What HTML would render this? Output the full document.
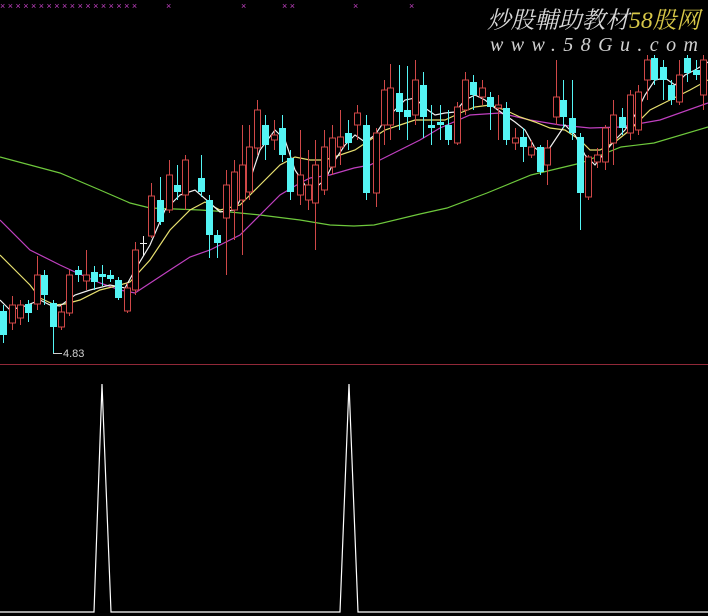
<!DOCTYPE html>
<html><head><meta charset="utf-8"><style>
html,body{margin:0;padding:0;background:#000;width:708px;height:616px;overflow:hidden}
svg{display:block}
</style></head><body>
<svg width="708" height="616" viewBox="0 0 708 616" xmlns="http://www.w3.org/2000/svg">
<rect width="708" height="616" fill="#000"/>
<g fill="#c040c0" font-family="Liberation Sans, sans-serif" font-size="9">
<text x="0" y="9">× × × × × × × × × × × × × × × × × ×</text>
<text x="166" y="9">×</text><text x="241" y="9">×</text><text x="282" y="9">× ×</text><text x="353" y="9">×</text><text x="409" y="9">×</text>
</g>
<g font-family="Liberation Serif, 'Noto Serif CJK SC', serif" font-style="italic">
<text x="487" y="28" font-size="23.5" fill="#d8d8d8" textLength="213" lengthAdjust="spacingAndGlyphs">炒股輔助教材<tspan fill="#d8c848">58股网</tspan></text>
<text x="490" y="51" font-size="20" fill="#d0d0d0" textLength="208" lengthAdjust="spacing">www.58Gu.com</text>
</g>
<g fill="none" stroke-width="1.2">
<polyline stroke="#6ec83c" points="0,157 60,173 100,190 130,203 150,208 200,210 230,212 260,215 300,220 330,225 354,226 374,225 420,214 447,208 487,193 531,175 581,163 621,147 654,143 708,127"/>
<polyline stroke="#c040c0" points="0,220 30,250 60,265 75,272 100,283 120,290 135,293 170,270 190,257 210,250 240,235 260,215 280,195 300,183 310,178 330,175 354,168 370,165 400,150 420,140 440,128 470,115 500,113 530,120 560,125 590,128 620,127 660,120 708,103"/>
<polyline stroke="#e8e070" points="0,255 15,270 30,285 40,298 55,305 65,304 80,300 100,290 120,285 130,282 150,260 170,230 190,210 205,202 220,210 240,205 260,185 280,165 295,157 310,160 325,160 340,155 355,150 370,140 385,130 400,125 415,120 430,120 445,120 460,113 475,107 490,105 505,110 520,117 535,122 550,128 565,130 580,140 590,150 600,150 615,142 630,130 650,110 670,100 690,90 708,80"/>
<polyline stroke="#f0f0f0" points="0,300 10,310 25,306 40,300 50,305 60,306 75,295 90,290 110,285 125,288 135,270 150,245 165,210 180,195 195,190 210,203 220,212 235,210 250,180 260,150 275,130 285,140 295,170 305,185 315,188 325,180 335,160 345,145 355,135 365,142 375,135 385,120 395,110 405,100 415,98 425,108 435,115 445,113 455,112 465,100 475,95 485,100 495,108 505,115 515,122 525,130 535,148 545,155 555,140 565,125 575,135 585,155 595,165 605,152 615,140 625,130 635,115 645,95 655,80 665,78 675,85 685,75 695,70 708,62"/>
</g>
<path stroke="#d04848" stroke-width="1" fill="none" d="M12.5 296V330M20.5 300V325M37.5 256V310M61.5 305V330M69.5 270V316M86.5 250V290M127.5 283V313M135.5 242V295M151.5 183V238M169.5 160V213M185.5 155V210M226.5 170V275M234.5 160V240M242.5 125V255M249.5 125V200M257.5 100V155M274.5 120V150M300.5 130V205M308.5 150V210M315.5 140V250M324.5 130V195M332.5 125V175M340.5 110V165M357.5 105V140M376.5 128V207M384.5 80V145M390.5 64V140M415.5 60V125M457.5 102V145M465.5 72V115M482.5 80V105M498.5 95V140M515.5 128V150M531.5 140V158M547.5 140V185M556.5 60V125M588.5 155V200M597.5 148V168M605.5 125V170M613.5 100V165M630.5 90V140M638.5 85V135M647.5 55V100M679.5 60V105M703.5 55V110"/>
<path stroke="#d04848" stroke-width="1" fill="#000" d="M9.5 305h6v18h-6zM17.5 305h6v13h-6zM34.5 275h6v29h-6zM58.5 312h6v15h-6zM66.5 275h6v38h-6zM83.5 275h6v6h-6zM124.5 288h6v23h-6zM132.5 250h6v40h-6zM148.5 196h6v40h-6zM166.5 175h6v35h-6zM182.5 160h6v35h-6zM223.5 185h6v33h-6zM231.5 172h6v38h-6zM239.5 165h6v35h-6zM246.5 147h6v45h-6zM254.5 110h6v38h-6zM271.5 135h6v5h-6zM297.5 175h6v20h-6zM305.5 185h6v15h-6zM312.5 165h6v38h-6zM321.5 147h6v43h-6zM329.5 138h6v29h-6zM337.5 137h6v10h-6zM354.5 113h6v12h-6zM373.5 133h6v60h-6zM381.5 90h6v35h-6zM387.5 88h6v37h-6zM412.5 80h6v35h-6zM454.5 107h6v36h-6zM462.5 80h6v30h-6zM479.5 88h6v9h-6zM495.5 105h6v3h-6zM512.5 138h6v5h-6zM528.5 147h6v8h-6zM544.5 148h6v17h-6zM553.5 97h6v20h-6zM585.5 157h6v40h-6zM594.5 155h6v7h-6zM602.5 128h6v34h-6zM610.5 115h6v28h-6zM627.5 95h6v38h-6zM635.5 92h6v38h-6zM644.5 60h6v20h-6zM676.5 75h6v27h-6zM700.5 60h6v35h-6z"/>
<path stroke="#54f4f4" stroke-width="1" fill="none" d="M3.5 305V343M28.5 300V322M44.5 270V305M53.5 300V353M78.5 266V282M94.5 266V290M102.5 265V286M110.5 270V282M118.5 277V300M160.5 177V225M177.5 165V200M201.5 155V197M209.5 195V258M217.5 230V258M265.5 115V160M282.5 115V162M290.5 150V200M348.5 120V150M366.5 115V200M399.5 65V130M407.5 66V140M423.5 72V138M431.5 105V145M440.5 105V140M448.5 110V145M473.5 75V110M490.5 92V130M506.5 102V145M523.5 128V162M540.5 145V175M563.5 80V128M572.5 80V140M580.5 133V230M622.5 108V135M654.5 55V85M663.5 60V100M671.5 80V105M687.5 55V82M696.5 60V80"/>
<path stroke="#f0f0f0" stroke-width="1" fill="none" d="M143.5 236V256M140 243.5h7"/>
<path fill="#54f4f4" d="M0 311h7v24h-7zM25 304h7v9h-7zM41 275h7v20h-7zM50 303h7v24h-7zM75 270h7v5h-7zM91 272h7v10h-7zM99 274h7v3h-7zM107 275h7v4h-7zM115 280h7v18h-7zM157 200h7v22h-7zM174 185h7v7h-7zM198 178h7v14h-7zM206 200h7v35h-7zM214 235h7v8h-7zM262 125h7v20h-7zM279 128h7v27h-7zM287 158h7v34h-7zM345 133h7v10h-7zM363 125h7v68h-7zM396 93h7v19h-7zM404 110h7v7h-7zM420 85h7v32h-7zM428 125h7v3h-7zM437 122h7v3h-7zM445 125h7v15h-7zM470 82h7v13h-7zM487 97h7v10h-7zM503 108h7v32h-7zM520 137h7v10h-7zM537 147h7v25h-7zM560 100h7v17h-7zM569 118h7v15h-7zM577 137h7v56h-7zM619 117h7v11h-7zM651 58h7v22h-7zM660 67h7v13h-7zM668 85h7v15h-7zM684 58h7v15h-7zM693 70h7v5h-7z"/>
<path stroke="#d0d0d0" stroke-width="1" fill="none" d="M53 353.5h9"/>
<text x="63" y="357" font-family="Liberation Sans, sans-serif" font-size="11" fill="#d0d0d0">4.83</text>
<line x1="0" y1="364.5" x2="708" y2="364.5" stroke="#902838" stroke-width="1"/>
<polyline fill="none" stroke="#fff" stroke-width="1.2" points="0,612 94,612 102,384 111,612 340,612 349,384 358,612 708,612"/>
</svg>
</body></html>
